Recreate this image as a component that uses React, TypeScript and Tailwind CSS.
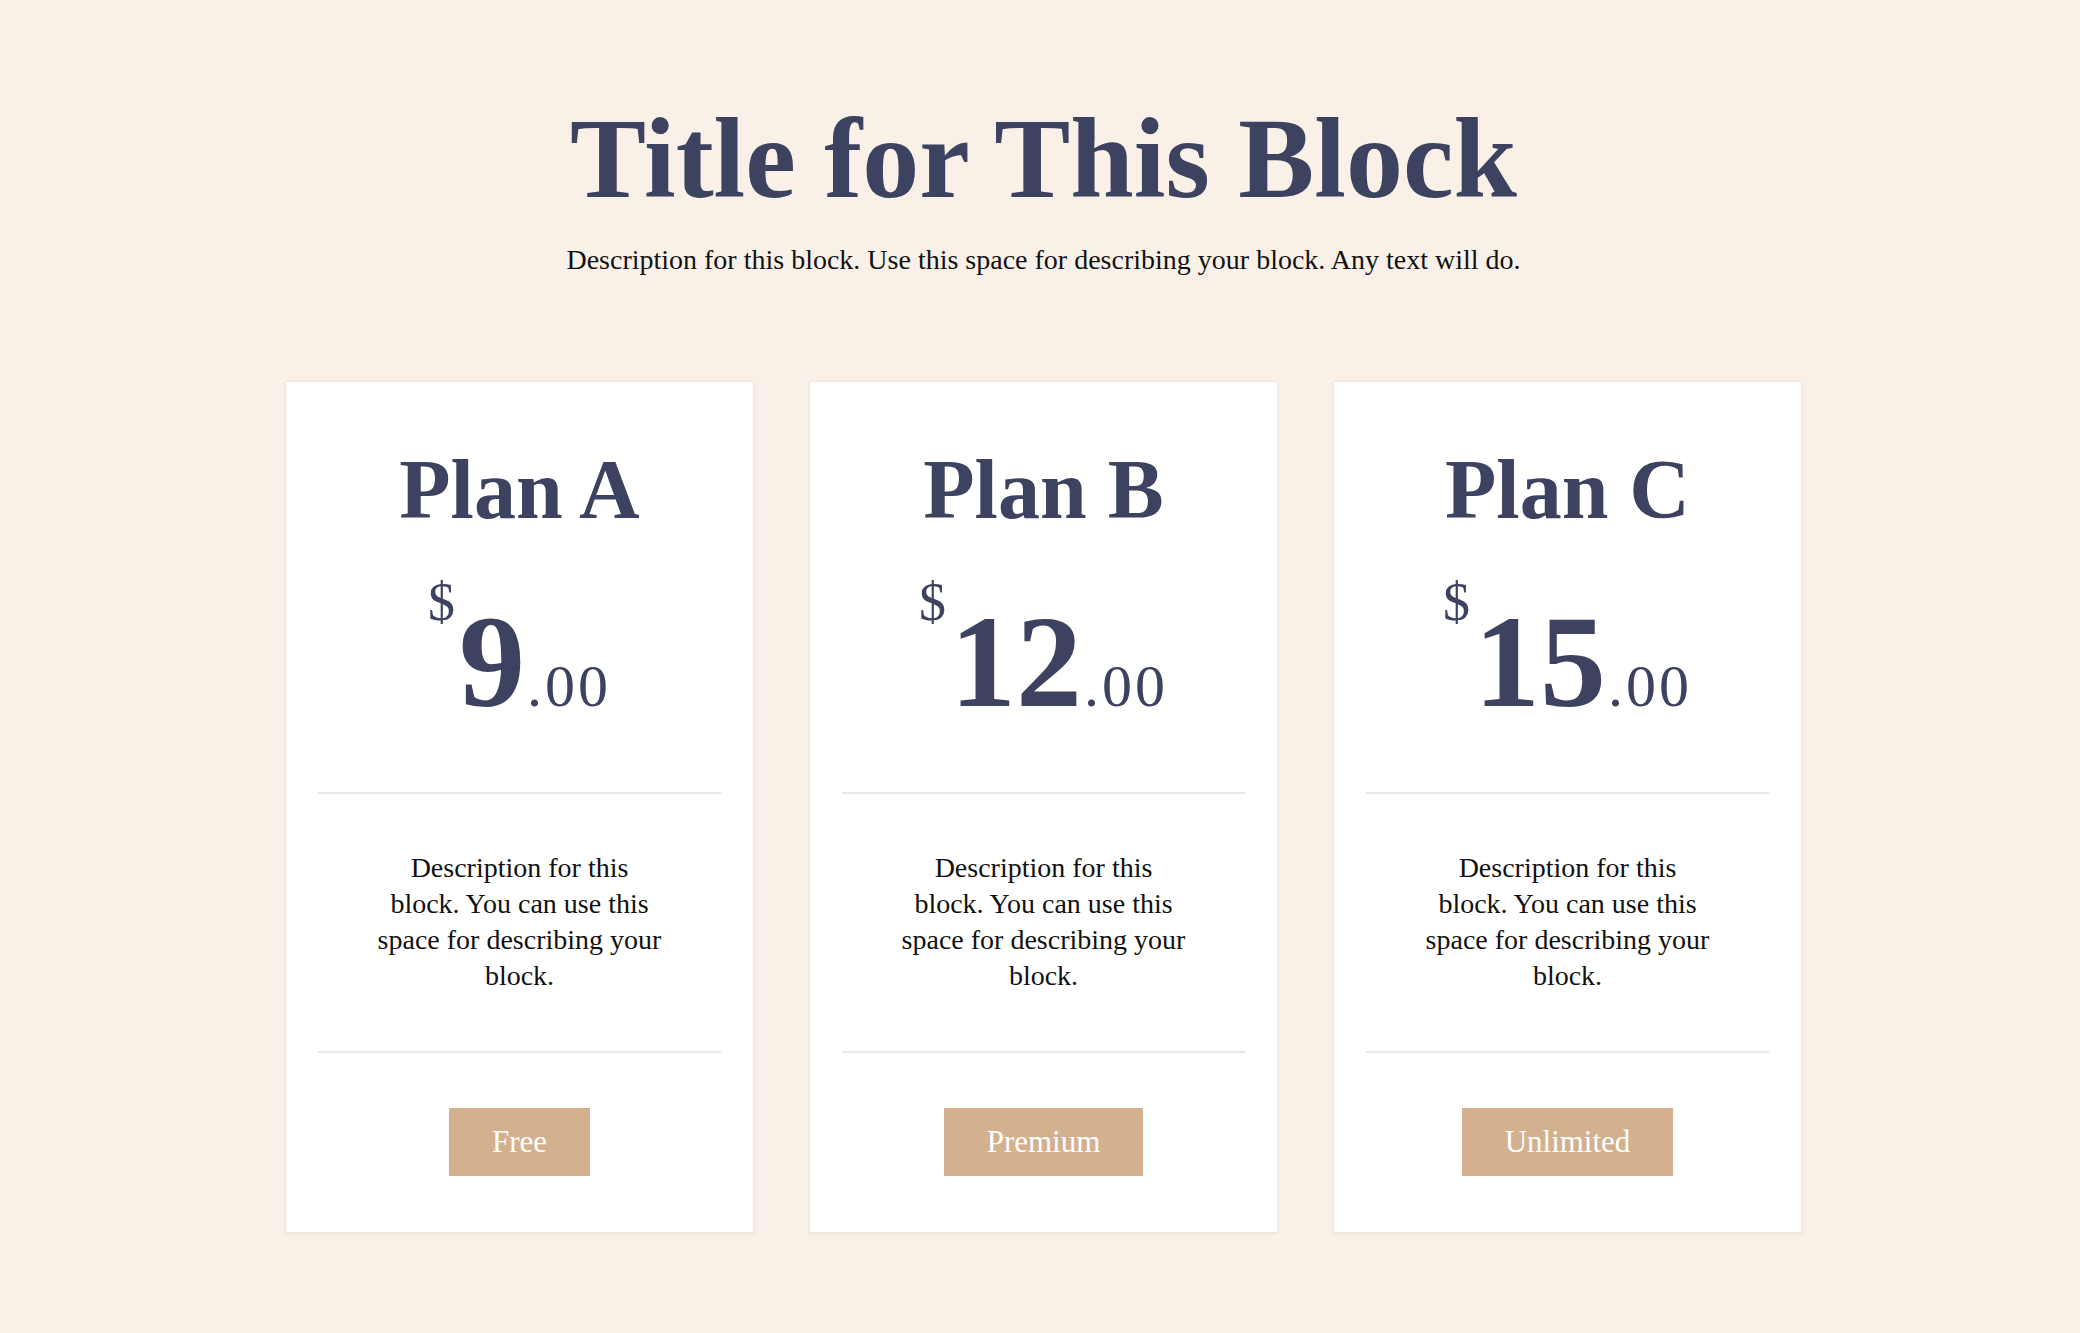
import React from 'react';

interface Plan {
  name: string;
  price: string;
  label: string;
}

const plans: Plan[] = [
  { name: 'Plan A', price: '9', label: 'Free' },
  { name: 'Plan B', price: '12', label: 'Premium' },
  { name: 'Plan C', price: '15', label: 'Unlimited' },
];

const serif = "font-['Liberation_Serif',Georgia,serif]";

function PlanCard({ name, price, label }: Plan) {
  return (
    <div className="flex flex-col border border-[#ebe7e3] bg-white shadow-[0_1px_3px_rgba(0,0,0,0.05)]">
      {/* Heading + price */}
      <div className="flex flex-col items-center pt-[66px] pb-[64px]">
        <h2 className="text-[84px] leading-none font-bold text-[#3c4260]">{name}</h2>
        <div className="mt-[43px] flex items-start text-[#3c4260]">
          <span className="mr-[4px] text-[54px] leading-none">$</span>
          <span className="mt-[21px] flex items-baseline">
            <span className="text-[132px] leading-none font-bold">{price}</span>
            <span className="ml-[2px] text-[60px] leading-none tracking-[3px]">.00</span>
          </span>
        </div>
      </div>

      <div className="mx-8 h-[2px] bg-[#e8e8e8]" />

      {/* Description */}
      <div className="flex justify-center pt-[56px] pb-[57px]">
        <p className="max-w-[290px] text-center text-[28px] leading-[36px] text-[#111111]">
          Description for this block. You can use this space for describing your block.
        </p>
      </div>

      <div className="mx-8 h-[2px] bg-[#e8e8e8]" />

      {/* Action */}
      <div className="flex justify-center pt-[55px] pb-[56px]">
        <button className="flex h-[68px] items-center bg-[#d3b18f] px-[43px] text-[31px] text-white">
          {label}
        </button>
      </div>
    </div>
  );
}

export default function App() {
  return (
    <div className={`min-h-[1333px] bg-[#f9f1e8] pl-[7px] ${serif}`}>
      <div className="mx-auto flex w-[1517px] flex-col items-center pt-[102px]">
        <h1 className="text-[114px] leading-none font-bold text-[#3c4260]">Title for This Block</h1>
        <p className="mt-[26px] text-[28px] leading-[36px] text-[#111111]">
          Description for this block. Use this space for describing your block. Any text will do.
        </p>

        {/* Pricing cards */}
        <div className="mt-[103px] grid w-full grid-cols-3 gap-[55px]">
          {plans.map((plan) => (
            <PlanCard key={plan.name} {...plan} />
          ))}
        </div>
      </div>
    </div>
  );
}
